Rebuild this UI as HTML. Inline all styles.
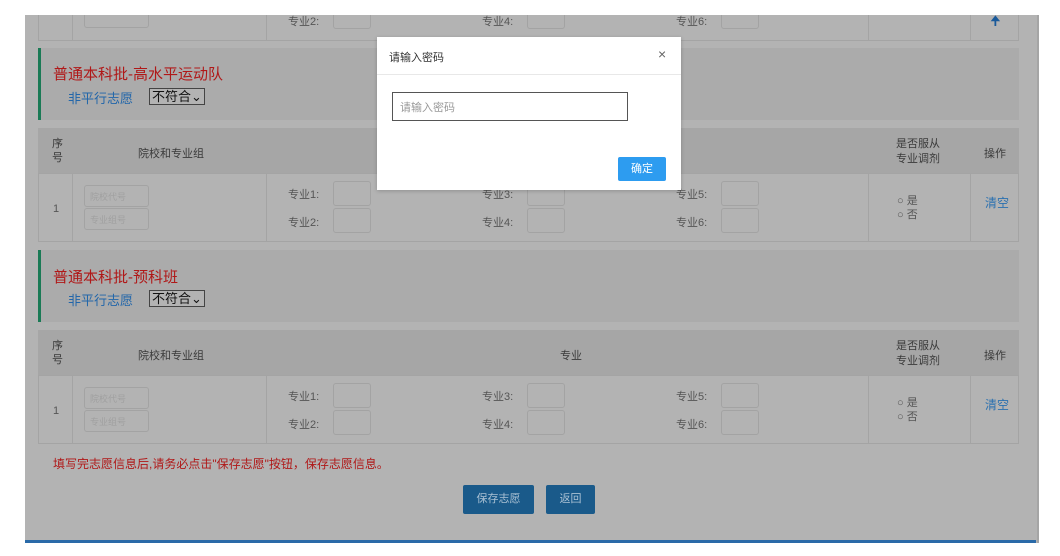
<!DOCTYPE html>
<html><head><meta charset="utf-8"><style>
*{margin:0;padding:0;box-sizing:border-box}
body{width:1060px;height:556px;background:#fff;position:relative;overflow:hidden;font-family:"Liberation Sans","Noto Sans CJK SC",sans-serif;font-size:12px;color:#444}
.a{position:absolute}
.pg{left:25px;top:15px;width:1014px;height:528px;background:#b3b3b3;border-right:2px solid #a5a5a5}
.blue{left:25px;top:540px;width:1011px;height:3px;background:#2a6aa8}
.sec{left:38px;width:981px;height:72px;background:#ababab}
.bar{left:38px;width:3px;height:72px;background:#1a7a55}
.t1{font-size:15px;color:#b01818}
.t2{font-size:13px;color:#2266aa}
.sel{width:56px;height:17px;border:1px solid #444;font-size:13px;color:#111;padding-left:2px;line-height:15px;background:#b3b3b3}
.hd{left:38px;width:981px;height:45px;background:#a6a6a6;color:#3a3a3a;font-size:11px}
.row{left:38px;width:981px;height:69px;border:1px solid #a4a4a4;background:#b3b3b3}
.vl{width:1px;background:#a4a4a4}
.in{width:65px;height:22px;border:1px solid #a3a3a3;border-radius:3px;font-size:9px;color:#a0a0a0;padding:4px 0 0 5px}
.bx{width:38px;height:25px;border:1px solid #a3a3a3;border-radius:3px}
.lb{font-size:11px;color:#555}
.btn{height:29px;background:#1a5a8a;color:#a9c0d3;font-size:11px;text-align:center;line-height:29px;border-radius:2px}
</style></head><body>
<div class="a pg"></div>
<div class="a blue"></div>

<!-- top partial row -->
<div class="a" style="left:38px;top:15px;width:981px;height:26px;border:1px solid #a4a4a4;border-top:none"></div>
<div class="a vl" style="left:72px;top:15px;height:26px"></div>
<div class="a vl" style="left:266px;top:15px;height:26px"></div>
<div class="a vl" style="left:868px;top:15px;height:26px"></div>
<div class="a vl" style="left:970px;top:15px;height:26px"></div>
<div class="a in" style="left:84px;top:6px;height:22px"></div>
<div class="a lb" style="left:288px;top:13px">专业2:</div><div class="a bx" style="left:333px;top:4px"></div>
<div class="a lb" style="left:482px;top:13px">专业4:</div><div class="a bx" style="left:527px;top:4px"></div>
<div class="a lb" style="left:676px;top:13px">专业6:</div><div class="a bx" style="left:721px;top:4px"></div>
<div class="a" style="left:990px;top:12px;color:#1a5a9a;font-size:13px">&#129033;</div>
<div class="a" style="left:0;top:0;width:1060px;height:15px;background:#fff"></div>

<!-- section 1 -->
<div class="a sec" style="top:48px"></div><div class="a bar" style="top:48px"></div>
<div class="a t1" style="left:53px;top:63px">普通本科批-高水平运动队</div>
<div class="a t2" style="left:68px;top:88px">非平行志愿</div>
<div class="a sel" style="left:149px;top:88px">不符合⌄</div>

<div class="a hd" style="top:128px"></div>
<div class="a" style="left:52px;top:137px;font-size:11px;color:#3a3a3a;line-height:14px">序<br>号</div>
<div class="a" style="left:138px;top:145px;font-size:11px;color:#3a3a3a">院校和专业组</div>
<div class="a" style="left:896px;top:137px;font-size:11px;color:#3a3a3a;line-height:15px;text-align:center">是否服从<br>专业调剂</div>
<div class="a" style="left:984px;top:145px;font-size:11px;color:#3a3a3a">操作</div>

<div class="a row" style="top:173px"></div>
<div class="a vl" style="left:72px;top:173px;height:69px"></div>
<div class="a vl" style="left:266px;top:173px;height:69px"></div>
<div class="a vl" style="left:868px;top:173px;height:69px"></div>
<div class="a vl" style="left:970px;top:173px;height:69px"></div>
<div class="a lb" style="left:53px;top:203px">1</div>
<div class="a in" style="left:84px;top:185px">院校代号</div>
<div class="a in" style="left:84px;top:208px">专业组号</div>
<div class="a lb" style="left:288px;top:186px">专业1:</div><div class="a bx" style="left:333px;top:181px"></div>
<div class="a lb" style="left:288px;top:214px">专业2:</div><div class="a bx" style="left:333px;top:208px"></div>
<div class="a lb" style="left:482px;top:186px">专业3:</div><div class="a bx" style="left:527px;top:181px"></div>
<div class="a lb" style="left:482px;top:214px">专业4:</div><div class="a bx" style="left:527px;top:208px"></div>
<div class="a lb" style="left:676px;top:186px">专业5:</div><div class="a bx" style="left:721px;top:181px"></div>
<div class="a lb" style="left:676px;top:214px">专业6:</div><div class="a bx" style="left:721px;top:208px"></div>
<div class="a lb" style="left:897px;top:194px;line-height:14px">○ 是<br>○ 否</div>
<div class="a" style="left:985px;top:194px;color:#2a70b0;font-size:12px">清空</div>

<!-- section 2 -->
<div class="a sec" style="top:250px"></div><div class="a bar" style="top:250px"></div>
<div class="a t1" style="left:53px;top:266px">普通本科批-预科班</div>
<div class="a t2" style="left:68px;top:290px">非平行志愿</div>
<div class="a sel" style="left:149px;top:290px">不符合⌄</div>

<div class="a hd" style="top:330px"></div>
<div class="a" style="left:52px;top:339px;font-size:11px;color:#3a3a3a;line-height:14px">序<br>号</div>
<div class="a" style="left:138px;top:347px;font-size:11px;color:#3a3a3a">院校和专业组</div>
<div class="a" style="left:560px;top:347px;font-size:11px;color:#3a3a3a">专业</div>
<div class="a" style="left:896px;top:339px;font-size:11px;color:#3a3a3a;line-height:15px;text-align:center">是否服从<br>专业调剂</div>
<div class="a" style="left:984px;top:347px;font-size:11px;color:#3a3a3a">操作</div>

<div class="a row" style="top:375px"></div>
<div class="a vl" style="left:72px;top:375px;height:69px"></div>
<div class="a vl" style="left:266px;top:375px;height:69px"></div>
<div class="a vl" style="left:868px;top:375px;height:69px"></div>
<div class="a vl" style="left:970px;top:375px;height:69px"></div>
<div class="a lb" style="left:53px;top:405px">1</div>
<div class="a in" style="left:84px;top:387px">院校代号</div>
<div class="a in" style="left:84px;top:410px">专业组号</div>
<div class="a lb" style="left:288px;top:388px">专业1:</div><div class="a bx" style="left:333px;top:383px"></div>
<div class="a lb" style="left:288px;top:416px">专业2:</div><div class="a bx" style="left:333px;top:410px"></div>
<div class="a lb" style="left:482px;top:388px">专业3:</div><div class="a bx" style="left:527px;top:383px"></div>
<div class="a lb" style="left:482px;top:416px">专业4:</div><div class="a bx" style="left:527px;top:410px"></div>
<div class="a lb" style="left:676px;top:388px">专业5:</div><div class="a bx" style="left:721px;top:383px"></div>
<div class="a lb" style="left:676px;top:416px">专业6:</div><div class="a bx" style="left:721px;top:410px"></div>
<div class="a lb" style="left:897px;top:396px;line-height:14px">○ 是<br>○ 否</div>
<div class="a" style="left:985px;top:396px;color:#2a70b0;font-size:12px">清空</div>

<div class="a" style="left:53px;top:455px;font-size:12px;color:#b01818">填写完志愿信息后,请务必点击"保存志愿"按钮，保存志愿信息。</div>
<div class="a btn" style="left:463px;top:485px;width:71px">保存志愿</div>
<div class="a btn" style="left:546px;top:485px;width:49px">返回</div>

<!-- modal -->
<div class="a" style="left:377px;top:37px;width:304px;height:153px;background:#fff;box-shadow:0 1px 4px rgba(0,0,0,.2)">
  <div class="a" style="left:0;top:0;width:304px;height:38px;border-bottom:1px solid #e8e8e8"></div>
  <div class="a" style="left:12px;top:12px;font-size:11px;color:#333">请输入密码</div>
  <div class="a" style="left:281px;top:9px;font-size:14px;color:#666">×</div>
  <div class="a" style="left:15px;top:55px;width:236px;height:29px;border:1px solid #555;font-size:11px;color:#999;padding:6px 0 0 7px">请输入密码</div>
  <div class="a" style="left:241px;top:120px;width:48px;height:24px;background:#2d9cf0;color:#fff;font-size:11px;text-align:center;line-height:24px;border-radius:2px">确定</div>
</div>
</body></html>
